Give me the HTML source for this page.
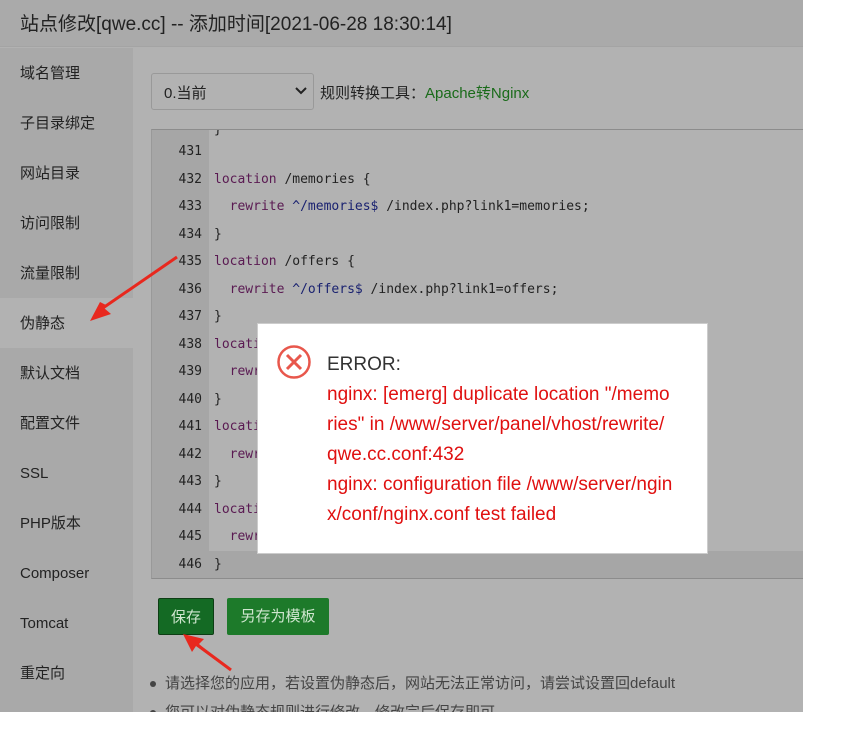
<!DOCTYPE html>
<html><head><meta charset="utf-8"><style>
*{margin:0;padding:0;box-sizing:border-box}
body{width:865px;height:749px;background:#fff;font-family:"Liberation Sans","Noto Sans CJK SC",sans-serif;position:relative;overflow:hidden}
.bg{position:absolute;left:0;top:0;width:803px;height:712px;background:#b2b2b2}
.hdr{position:absolute;left:0;top:0;width:803px;height:47px;background:#aaaaaa;border-bottom:1px solid #a4a4a4;font-size:19px;color:#222;padding:9px 0 0 20px}
.side{position:absolute;left:0;top:48px;width:133px;height:664px;background:#a9a9a9}
.side div{height:50px;line-height:52px;padding-left:20px;font-size:15px;color:#222}
.side .act{background:#b2b2b2}
.sel{position:absolute;left:151px;top:73px;width:163px;height:37px;border:1px solid #999;border-radius:3px;background:#b2b2b2;font-size:15px;color:#222;padding:8px 0 0 12px}
.sel svg{position:absolute;right:6px;top:13px}
.tool{position:absolute;left:320px;top:82px;font-size:15px;color:#222}
.tool span{color:#1a6b1a}
.ed{position:absolute;left:151px;top:129px;width:652px;height:450px;border-top:1px solid #8c8c8c;border-left:1px solid #999;border-bottom:1px solid #8c8c8c;background:#b2b2b2;overflow:hidden}
.gut{position:absolute;left:0;top:0;width:57px;height:450px;background:#a6a6a6}
.ln{position:absolute;left:0;width:652px;height:27.5px;font-family:"DejaVu Sans Mono","Liberation Mono",monospace;font-size:13px;line-height:27.5px;color:#222}
.ln b{font-weight:normal;display:inline-block;width:50px;text-align:right;color:#222}
.ln i{font-style:normal;margin-left:12px;white-space:pre}
.k{color:#5a1a52}.s{color:#1a2270}
.cur{background:#a6a6a6}
.dlg{position:absolute;left:257px;top:323px;width:451px;height:231px;background:#fff;border:1px solid #ccc}
.dlg .t{position:absolute;left:69px;top:26px;font-size:19px;color:#333;line-height:30px;width:380px;white-space:nowrap}
.dlg .r{color:#e01010}
.btn{position:absolute;top:598px;height:37px;line-height:37px;color:#cfe6cf;font-size:15px;text-align:center;border-radius:2px}
.tip{position:absolute;left:150px;font-size:15px;color:#444}
.tip:before{content:"";display:inline-block;width:6px;height:6px;border-radius:3px;background:#444;margin-right:9px;vertical-align:middle}
</style></head><body>
<div class="bg"></div>
<div class="hdr">站点修改[qwe.cc] -- 添加时间[2021-06-28 18:30:14]</div>
<div class="side">
<div>域名管理</div><div>子目录绑定</div><div>网站目录</div><div>访问限制</div><div>流量限制</div><div class="act">伪静态</div><div>默认文档</div><div>配置文件</div><div>SSL</div><div>PHP版本</div><div>Composer</div><div>Tomcat</div><div>重定向</div>
</div>
<div class="sel">0.当前<svg width="12" height="8" viewBox="0 0 12 8"><path d="M1 1l5 5 5-5" fill="none" stroke="#222" stroke-width="2"/></svg></div>
<div class="tool">规则转换工具：<span>Apache转Nginx</span></div>
<div class="ed"><div class="gut"></div>
<div class="ln" style="top:-14px"><b></b><i>}</i></div>
<div class="ln" style="top:8px"><b>431</b><i></i></div>
<div class="ln" style="top:35.5px"><b>432</b><i><span class="k">location</span> /memories {</i></div>
<div class="ln" style="top:63px"><b>433</b><i>  <span class="k">rewrite</span> <span class="s">^/memories$</span> /index.php?link1=memories;</i></div>
<div class="ln" style="top:90.5px"><b>434</b><i>}</i></div>
<div class="ln" style="top:118px"><b>435</b><i><span class="k">location</span> /offers {</i></div>
<div class="ln" style="top:145.5px"><b>436</b><i>  <span class="k">rewrite</span> <span class="s">^/offers$</span> /index.php?link1=offers;</i></div>
<div class="ln" style="top:173px"><b>437</b><i>}</i></div>
<div class="ln" style="top:200.5px"><b>438</b><i><span class="k">location</span></i></div>
<div class="ln" style="top:228px"><b>439</b><i>  <span class="k">rewrite</span></i></div>
<div class="ln" style="top:255.5px"><b>440</b><i>}</i></div>
<div class="ln" style="top:283px"><b>441</b><i><span class="k">location</span></i></div>
<div class="ln" style="top:310.5px"><b>442</b><i>  <span class="k">rewrite</span></i></div>
<div class="ln" style="top:338px"><b>443</b><i>}</i></div>
<div class="ln" style="top:365.5px"><b>444</b><i><span class="k">location</span></i></div>
<div class="ln" style="top:393px"><b>445</b><i>  <span class="k">rewrite</span></i></div>
<div class="ln cur" style="top:420.5px"><b>446</b><i>}</i></div>
</div>
<div class="btn" style="left:158px;width:56px;background:#146a24;border:1px solid #0d3d14">保存</div>
<div class="btn" style="left:227px;width:102px;background:#1d7a2a">另存为模板</div>
<div class="tip" style="top:672px">请选择您的应用，若设置伪静态后，网站无法正常访问，请尝试设置回default</div>
<div class="tip" style="top:702px;height:10px;overflow:hidden;line-height:22px">您可以对伪静态规则进行修改，修改完后保存即可。</div>
<svg style="position:absolute;left:0;top:0" width="865" height="749">
<path d="M177 258 L104 308 L111 314 L90 321 L100 302 L106 305 Z" fill="#e8281e"/>
<line x1="177" y1="257" x2="100" y2="310" stroke="#e8281e" stroke-width="3"/>
<path d="M229 670 L196 646 L192 652 L183 634 L204 639 L199 644 Z" fill="#e8281e"/>
<line x1="231" y1="670" x2="192" y2="641" stroke="#e8281e" stroke-width="3"/>
</svg>
<div class="dlg">
<svg style="position:absolute;left:18px;top:20px" width="36" height="36" viewBox="0 0 36 36"><circle cx="18" cy="18" r="15.5" fill="none" stroke="#e8574c" stroke-width="2.5"/><path d="M11 11L25 25M25 11L11 25" stroke="#e8574c" stroke-width="3"/></svg>
<div class="t">ERROR:<br><span class="r">nginx: [emerg] duplicate location "/memo<br>ries" in /www/server/panel/vhost/rewrite/<br>qwe.cc.conf:432<br>nginx: configuration file /www/server/ngin<br>x/conf/nginx.conf test failed</span></div>
</div>
</body></html>
